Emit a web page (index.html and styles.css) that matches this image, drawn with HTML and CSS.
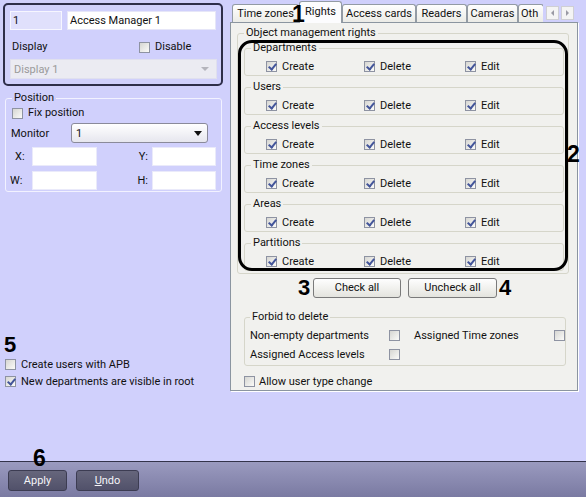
FILE: index.html
```html
<!DOCTYPE html>
<html>
<head>
<meta charset="utf-8">
<link rel="stylesheet" href="styles.css">
</head>
<body>
<div class="app">
  <div class="main">
    <div class="left">
      <div class="idbox">
        <div class="row1">
          <div class="inp inp-id">1</div>
          <div class="inp inp-name">Access Manager 1</div>
        </div>
        <div class="row2">
          <span class="lbl-display">Display</span>
          <span class="chk"><span class="box"></span>Disable</span>
        </div>
        <div class="sel sel-dis"><span>Display 1</span><span class="arr-dis"></span></div>
      </div>

      <fieldset class="pos">
        <legend>Position</legend>
        <div class="chk fixrow"><span class="box"></span>Fix position</div>
        <div class="monrow">
          <span>Monitor</span>
          <div class="sel sel-mon"><span>1</span><span class="arr"></span></div>
        </div>
        <div class="xy">
          <span class="xl">X:</span><div class="inp"></div>
          <span class="xr">Y:</span><div class="inp"></div>
          <span class="xl xw">W:</span><div class="inp"></div>
          <span class="xr">H:</span><div class="inp"></div>
        </div>
      </fieldset>

      <div class="opts">
        <div class="num">5</div>
        <div class="chk optrow"><span class="box"></span>Create users with APB</div>
        <div class="chk optrow"><span class="box on"></span>New departments are visible in root</div>
      </div>
    </div>

    <div class="right">
      <div class="tabs">
        <div class="strip">
          <div class="tab t-tz">Time zones</div>
          <div class="tab sel-tab t-rights">Rights</div>
          <div class="tab t-ac">Access cards</div>
          <div class="tab t-rd">Readers</div>
          <div class="tab t-cam">Cameras</div>
          <div class="tab t-oth">Oth</div>
        </div>
        <div class="arrows">
          <span class="abtn"><span class="tri-l"></span></span>
          <span class="abtn"><span class="tri-r"></span></span>
        </div>
      </div>

      <div class="pane">
        <fieldset class="obj">
          <legend>Object management rights</legend>
          <fieldset class="grp">
            <legend>Departments</legend>
            <div class="cbrow">
              <span class="chk"><span class="box on"></span>Create</span>
              <span class="chk"><span class="box on"></span>Delete</span>
              <span class="chk"><span class="box on"></span>Edit</span>
            </div>
          </fieldset>
          <fieldset class="grp">
            <legend>Users</legend>
            <div class="cbrow">
              <span class="chk"><span class="box on"></span>Create</span>
              <span class="chk"><span class="box on"></span>Delete</span>
              <span class="chk"><span class="box on"></span>Edit</span>
            </div>
          </fieldset>
          <fieldset class="grp">
            <legend>Access levels</legend>
            <div class="cbrow">
              <span class="chk"><span class="box on"></span>Create</span>
              <span class="chk"><span class="box on"></span>Delete</span>
              <span class="chk"><span class="box on"></span>Edit</span>
            </div>
          </fieldset>
          <fieldset class="grp">
            <legend>Time zones</legend>
            <div class="cbrow">
              <span class="chk"><span class="box on"></span>Create</span>
              <span class="chk"><span class="box on"></span>Delete</span>
              <span class="chk"><span class="box on"></span>Edit</span>
            </div>
          </fieldset>
          <fieldset class="grp">
            <legend>Areas</legend>
            <div class="cbrow">
              <span class="chk"><span class="box on"></span>Create</span>
              <span class="chk"><span class="box on"></span>Delete</span>
              <span class="chk"><span class="box on"></span>Edit</span>
            </div>
          </fieldset>
          <fieldset class="grp last">
            <legend>Partitions</legend>
            <div class="cbrow">
              <span class="chk"><span class="box on"></span>Create</span>
              <span class="chk"><span class="box on"></span>Delete</span>
              <span class="chk"><span class="box on"></span>Edit</span>
            </div>
          </fieldset>
        </fieldset>

        <div class="btnrow">
          <span class="num n3">3</span>
          <span class="btn b-check">Check all</span>
          <span class="btn b-uncheck">Uncheck all</span>
          <span class="num n4">4</span>
        </div>

        <fieldset class="forbid">
          <legend>Forbid to delete</legend>
          <div class="fgrid">
            <span>Non-empty departments</span><span class="box"></span>
            <span>Assigned Time zones</span><span class="box"></span>
            <span>Assigned Access levels</span><span class="box"></span>
          </div>
        </fieldset>

        <div class="chk allow"><span class="box"></span>Allow user type change</div>

        <div class="mark"></div>
      </div>
    </div>
  </div>

  <div class="bar">
    <span class="bbtn b-apply">Apply</span>
    <span class="bbtn b-undo"><u>U</u>ndo</span>
  </div>

  <span class="anno a1">1</span>
  <span class="anno a2">2</span>
  <span class="anno a6">6</span>
</div>
</body>
</html>
```

FILE: styles.css
```css
* { box-sizing: border-box; }
html, body { margin: 0; padding: 0; }
body {
  width: 586px;
  height: 497px;
  overflow: hidden;
  background: #d0d0fc;
  font-family: Roboto, "Liberation Sans", Arial, sans-serif;
  font-size: 11px;
  color: #111;
}
.app {
  position: relative;
  width: 586px;
  height: 497px;
  display: flex;
  flex-direction: column;
}
.main { display: flex; height: 461px; }

/* ---------- left column ---------- */
.left {
  width: 230px;
  padding-top: 3px;
  display: flex;
  flex-direction: column;
}
.idbox {
  margin-left: 3px;
  width: 220px;
  height: 83px;
  border: 2px solid #2e2e4a;
  border-radius: 5px;
  padding: 6px 5px 0 5px;
}
.row1 { display: flex; gap: 5px; }
.inp {
  height: 19px;
  border: 1px solid #e6e6f8;
  background: #fff;
  line-height: 17px;
  padding-left: 2px;
}
.inp-id { width: 52px; background: #e0e0fc; border-color: #f6f6ff; }
.inp-name { width: 149px; }
.row2 {
  display: grid;
  grid-template-columns: 129px auto;
  margin-top: 10px;
  height: 14px;
  line-height: 14px;
}
.lbl-display { padding-left: 2px; }
.sel {
  display: flex;
  justify-content: space-between;
  align-items: center;
}
.sel-dis {
  margin-top: 5px;
  width: 207px;
  height: 20px;
  background: #ebebf2;
  border: 1px solid #e0e0ee;
  color: #9a9a9a;
  padding: 0 7px 0 3px;
}
.arr-dis {
  width: 0; height: 0;
  border-left: 4px solid transparent;
  border-right: 4px solid transparent;
  border-top: 4px solid #b4b4bc;
}

.pos {
  margin: 5px 0 0 5px;
  width: 217px;
  border: 1px solid #f2f2ff;
  border-radius: 3px;
  padding: 1px 5px 1px 5px;
  min-width: 0;
}
.pos legend { padding: 0 2px; margin-left: 1px; line-height: 14px; }
.fixrow { height: 14px; line-height: 14px; padding-left: 1px; }
.monrow {
  margin-top: 3px;
  display: grid;
  grid-template-columns: 60px 137px;
  align-items: center;
  height: 20px;
}
.sel-mon {
  height: 20px;
  border: 1px solid #8a8a9a;
  border-radius: 3px;
  background: linear-gradient(#ffffff, #e6e6ee);
  padding: 0 5px 0 4px;
}
.arr {
  width: 0; height: 0;
  border-left: 4px solid transparent;
  border-right: 4px solid transparent;
  border-top: 5px solid #111;
}
.xy {
  margin-top: 4px;
  display: grid;
  grid-template-columns: 21px 65px 55px 64px;
  grid-auto-rows: 19px;
  row-gap: 5px;
  align-items: center;
}
.xy .inp { border-color: #eaeafa; }
.xl { padding-left: 4px; }
.xw { padding-left: 0; margin-left: -1px; }
.xr { text-align: right; padding-right: 4px; }

.opts { margin-top: 142px; padding-left: 4px; }
.num {
  font-family: "Liberation Sans", Arial, sans-serif;
  font-weight: bold;
  font-size: 22px;
  line-height: 22px;
  color: #000;
}
.optrow { height: 17px; line-height: 17px; padding-left: 1px; }

/* ---------- checkboxes ---------- */
.chk { display: flex; align-items: center; gap: 5px; white-space: nowrap; }
.box {
  display: inline-block;
  position: relative;
  flex: none;
  width: 11px;
  height: 11px;
  border: 1px solid #8e93a2;
  background: linear-gradient(135deg, #d6d6d2, #fbfbf9);
}
.box.on::after {
  content: "";
  position: absolute;
  left: 3px;
  top: 0px;
  width: 3px;
  height: 6px;
  border-right: 2px solid #43559a;
  border-bottom: 2px solid #43559a;
  transform: rotate(40deg);
}

/* ---------- right column ---------- */
.right { width: 350px; display: flex; flex-direction: column; }
.tabs {
  height: 23px;
  display: flex;
  align-items: flex-end;
  padding-left: 2px;
  position: relative;
  z-index: 2;
}
.strip {
  width: 311px;
  height: 23px;
  overflow: hidden;
  display: flex;
  align-items: flex-end;
}
.tab {
  flex: none;
  height: 18px;
  margin-bottom: 1px;
  border: 1px solid #939ba4;
  border-bottom: none;
  border-radius: 3px 3px 0 0;
  background: linear-gradient(#ffffff, #ebebe6);
  text-align: center;
  line-height: 17px;
  white-space: nowrap;
  overflow: hidden;
}
.sel-tab {
  height: 22px;
  margin-bottom: 0;
  background: #fcfcfe;
  line-height: 19px;
}
.t-tz { width: 67px; }
.t-rights { width: 43px; }
.t-ac { width: 74px; }
.t-rd { width: 51px; }
.t-cam { width: 51px; }
.t-oth { width: 26px; text-align: left; padding-left: 2px; }
.arrows {
  display: flex;
  gap: 2px;
  margin-left: 3px;
  margin-bottom: 3px;
}
.abtn {
  width: 13px;
  height: 14px;
  border: 1px solid #cfcfd4;
  background: #f4f4f4;
  display: flex;
  align-items: center;
  justify-content: center;
}
.tri-l, .tri-r { width: 0; height: 0; border-top: 3px solid transparent; border-bottom: 3px solid transparent; }
.tri-l { border-right: 3px solid #9a9aa4; }
.tri-r { border-left: 3px solid #9a9aa4; }

.pane {
  position: relative;
  margin-top: -1px;
  width: 348px;
  height: 369px;
  border: 1px solid #8b95a0;
  background: #f1f1ee;
  box-shadow: 1px 1px 0 #ffffff;
}
fieldset legend { line-height: 14px; padding: 0 2px; }
.obj {
  margin: 3px 0 0 6px;
  width: 332px;
  border: 1px solid #d6d6ca;
  border-radius: 3px;
  padding: 1px 4px 2px 6px;
  min-width: 0;
}
.grp {
  margin: 0 0 4px 0;
  width: 320px;
  border: 1px solid #d6d6ca;
  border-radius: 3px;
  padding: 4px 4px 1px 6px;
  min-width: 0;
}
.grp.last { margin-bottom: 0; }
.cbrow {
  display: grid;
  grid-template-columns: 98px 101px auto;
  height: 15px;
  padding-left: 15px;
  align-items: center;
}

.btnrow {
  margin-top: 4px;
  height: 20px;
  padding-left: 67px;
  display: flex;
  align-items: center;
}
.btnrow .num { width: 13px; line-height: 20px; }
.btn {
  height: 20px;
  border: 1px solid #7a7a7a;
  border-radius: 3px;
  background: linear-gradient(#fefefe, #e4e4de);
  text-align: center;
  line-height: 18px;
}
.b-check { width: 88px; margin-left: 2px; }
.b-uncheck { width: 89px; margin-left: 7px; }
.n4 { margin-left: 2px; }

.forbid {
  margin: 12px 0 0 13px;
  width: 322px;
  border: 1px solid #d6d6ca;
  border-radius: 3px;
  padding: 2px 0 1px 5px;
  min-width: 0;
}
.fgrid {
  display: grid;
  grid-template-columns: 139px 25px 140px 11px;
  grid-auto-rows: 19px;
  align-items: center;
  white-space: nowrap;
}
.allow {
  margin-top: 7px;
  height: 16px;
  padding-left: 13px;
  gap: 4px;
}

.mark {
  position: absolute;
  left: 7px;
  top: 17px;
  width: 330px;
  height: 231px;
  border: 3px solid #000;
  border-radius: 14px;
}

/* ---------- bottom bar ---------- */
.bar {
  height: 36px;
  border-top: 1px solid #33334a;
  background: linear-gradient(#9a9abf, #7a7aa2);
  display: flex;
  gap: 9px;
  padding: 8px 0 0 8px;
}
.bbtn {
  height: 21px;
  border: 1px solid #3c3c52;
  border-radius: 3px;
  background: linear-gradient(#66667c, #51516a);
  color: #f4f4f8;
  text-align: center;
  line-height: 19px;
}
.b-apply { width: 59px; }
.b-undo { width: 63px; }

/* ---------- annotation numbers ---------- */
.anno {
  position: absolute;
  z-index: 5;
  font-family: "Liberation Sans", Arial, sans-serif;
  font-weight: bold;
  font-size: 23px;
  line-height: 23px;
  color: #000;
}
.a1 { left: 292px; top: 3px; }
.a2 { left: 567px; top: 143px; }
.a6 { left: 33px; top: 447px; }
```
